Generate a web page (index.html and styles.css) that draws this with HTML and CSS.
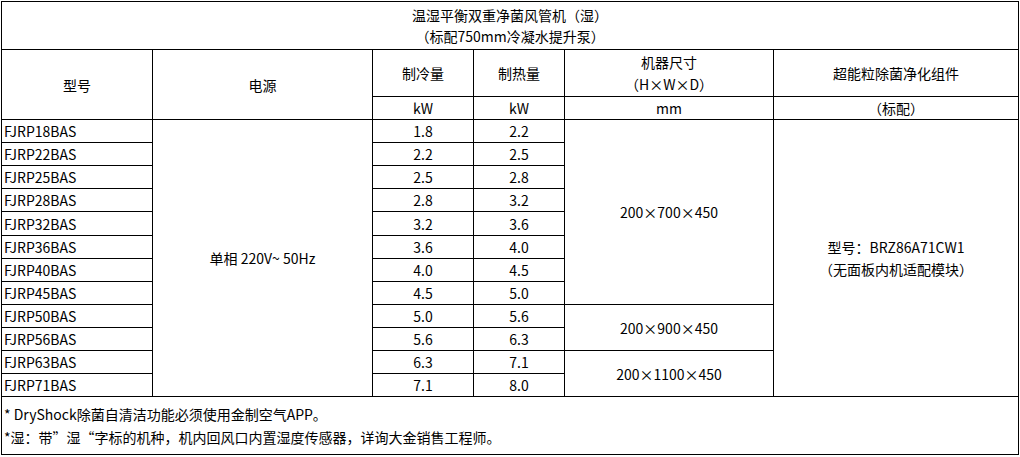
FILE: index.html
```html
<!DOCTYPE html>
<html lang="zh-CN">
<head>
<meta charset="utf-8">
<title>温湿平衡双重净菌风管机（湿）</title>
<link rel="stylesheet" href="styles.css">
</head>
<body>
<div class="wrap">
<table class="spec">
  <colgroup>
    <col class="c1"><col class="c2"><col class="c3"><col class="c4"><col class="c5"><col class="c6">
  </colgroup>
  <tr class="r-title">
    <td colspan="6" class="title">温湿平衡双重净菌风管机（湿）<br>（标配750mm冷凝水提升泵）</td>
  </tr>
  <tr class="r-head">
    <td rowspan="2">型号</td>
    <td rowspan="2">电源</td>
    <td>制冷量</td>
    <td>制热量</td>
    <td class="two">机器尺寸<br>（H×W×D）</td>
    <td>超能粒除菌净化组件</td>
  </tr>
  <tr class="r-unit">
    <td>kW</td>
    <td>kW</td>
    <td>mm</td>
    <td>（标配）</td>
  </tr>
  <tr class="r-body">
    <td class="model">FJRP18BAS</td>
    <td rowspan="12">单相 220V~ 50Hz</td>
    <td>1.8</td><td>2.2</td>
    <td rowspan="8">200×700×450</td>
    <td rowspan="12" class="two">型号：BRZ86A71CW1<br>（无面板内机适配模块）</td>
  </tr>
  <tr class="r-body"><td class="model">FJRP22BAS</td><td>2.2</td><td>2.5</td></tr>
  <tr class="r-body"><td class="model">FJRP25BAS</td><td>2.5</td><td>2.8</td></tr>
  <tr class="r-body"><td class="model">FJRP28BAS</td><td>2.8</td><td>3.2</td></tr>
  <tr class="r-body tall"><td class="model">FJRP32BAS</td><td>3.2</td><td>3.6</td></tr>
  <tr class="r-body"><td class="model">FJRP36BAS</td><td>3.6</td><td>4.0</td></tr>
  <tr class="r-body"><td class="model">FJRP40BAS</td><td>4.0</td><td>4.5</td></tr>
  <tr class="r-body"><td class="model">FJRP45BAS</td><td>4.5</td><td>5.0</td></tr>
  <tr class="r-body">
    <td class="model">FJRP50BAS</td><td>5.0</td><td>5.6</td>
    <td rowspan="2">200×900×450</td>
  </tr>
  <tr class="r-body"><td class="model">FJRP56BAS</td><td>5.6</td><td>6.3</td></tr>
  <tr class="r-body">
    <td class="model">FJRP63BAS</td><td>6.3</td><td>7.1</td>
    <td rowspan="2">200×1100×450</td>
  </tr>
  <tr class="r-body"><td class="model">FJRP71BAS</td><td>7.1</td><td>8.0</td></tr>
  <tr class="r-foot">
    <td colspan="6" class="note">* DryShock除菌自清洁功能必须使用金制空气APP。<br>*湿：带”湿“字标的机种，机内回风口内置湿度传感器，详询大金销售工程师。</td>
  </tr>
</table>
</div>
</body>
</html>
```

FILE: styles.css
```css
html, body {
  margin: 0;
  padding: 0;
  background: #ffffff;
}

.wrap {
  padding: 1px 0 0 1px;
}

.spec {
  border-collapse: collapse;
  table-layout: fixed;
  width: 1017px;
  font-family: "Noto Sans CJK SC", "Noto Sans", sans-serif;
  font-size: 14px;
  color: #000000;
}

.c1 { width: 151px; }
.c2 { width: 220px; }
.c3 { width: 101px; }
.c4 { width: 91px; }
.c5 { width: 209px; }
.c6 { width: 245px; }

.spec td {
  border: 1px solid #000000;
  padding: 0 1px;
  text-align: center;
  vertical-align: middle;
  line-height: 20px;
  white-space: nowrap;
}

.r-title { height: 48px; }
.r-title td { line-height: 21px; }
.r-head { height: 47px; }
.r-head td.two { line-height: 21px; }
.r-unit { height: 23px; }
.r-body { height: 23px; }
.r-body.tall { height: 24px; }
.spec td.two { line-height: 22px; }

.spec td.model {
  text-align: left;
  padding-left: 2px;
}

.r-foot { height: 58px; }
.r-foot td {
  text-align: left;
  line-height: 23px;
  padding-left: 2px;
}
```
